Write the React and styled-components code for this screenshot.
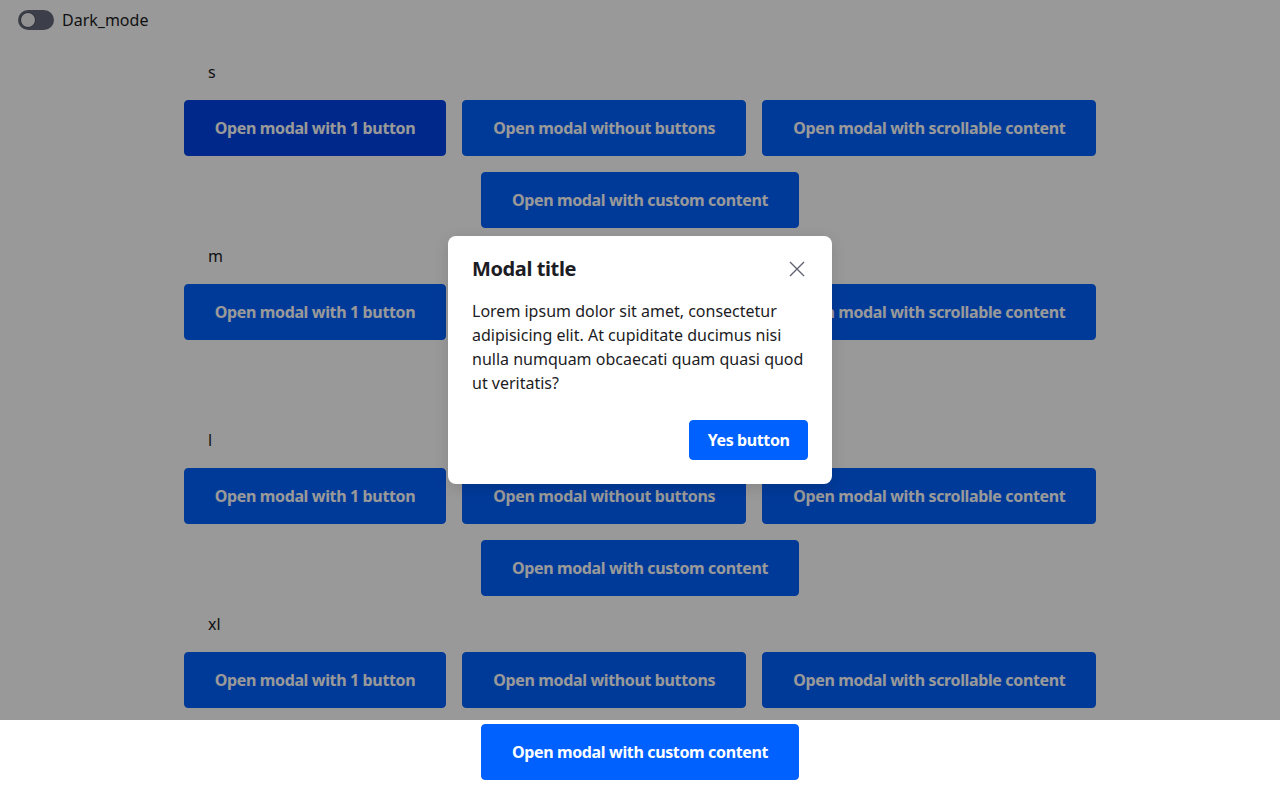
import React from 'react'
import styled, { createGlobalStyle } from 'styled-components'

const GlobalStyle = createGlobalStyle`
  html, body {
    margin: 0;
    padding: 0;
    background: #ffffff;
    font-family: "Noto Sans", "Open Sans", sans-serif;
    color: #1c1c24;
  }
`

const Page = styled.div`
  position: relative;
  width: 1280px;
  min-height: 804px;
`

const TopBar = styled.div`
  display: flex;
  align-items: center;
  gap: 8px;
  height: 40px;
  padding-left: 18px;
  font-size: 16px;
`

const Toggle = styled.span`
  display: inline-flex;
  align-items: center;
  box-sizing: border-box;
  width: 36px;
  height: 20px;
  padding: 2px;
  border-radius: 10px;
  background: #646a7a;
`

const Knob = styled.span`
  width: 16px;
  height: 16px;
  box-sizing: border-box;
  border-radius: 50%;
  background: #f2f2f2;
  border: 1px solid #4a4f5c;
`

const Content = styled.div`
  width: 916px;
  margin: 20px auto 0;
  display: flex;
  flex-direction: column;
  gap: 16px;
`

const SizeLabel = styled.div`
  padding-left: 26px;
  line-height: 24px;
  font-size: 16px;
`

const ButtonRow = styled.div`
  display: flex;
  flex-wrap: wrap;
  justify-content: center;
  gap: 16px;
`

const Button = styled.button`
  height: 56px;
  padding: 0 30px;
  border: 1px solid ${p => (p.$active ? '#0044e6' : '#0061ff')};
  border-radius: 4px;
  background: ${p => (p.$active ? '#0044e6' : '#0061ff')};
  color: #ffffff;
  font-family: inherit;
  font-size: 16px;
  font-weight: 700;
  letter-spacing: -0.36px;
  cursor: pointer;
`

const Overlay = styled.div`
  position: absolute;
  top: 0;
  left: 0;
  right: 0;
  height: 720px;
  background: rgba(0, 0, 0, 0.4);
  display: flex;
  align-items: center;
  justify-content: center;
`

const Modal = styled.div`
  width: 384px;
  box-sizing: border-box;
  padding: 21px 24px 24px;
  background: #ffffff;
  border-radius: 8px;
  box-shadow: 0 4px 16px rgba(0, 0, 0, 0.12);
  display: flex;
  flex-direction: column;
`

const ModalHeader = styled.div`
  display: flex;
  align-items: center;
  justify-content: space-between;
`

const ModalTitle = styled.h2`
  margin: 0;
  font-size: 20px;
  line-height: 24px;
  font-weight: 700;
  letter-spacing: -0.4px;
  color: #1c1c24;
`

const CloseButton = styled.button`
  display: flex;
  padding: 0;
  margin-right: -1px;
  border: none;
  background: none;
  cursor: pointer;
`

const ModalBody = styled.p`
  margin: 18px 0 25px;
  font-size: 16px;
  line-height: 24px;
  color: #1c1c24;
`

const ModalFooter = styled.div`
  display: flex;
  justify-content: flex-end;
`

const YesButton = styled(Button)`
  height: 40px;
  padding: 0 17.5px;
  letter-spacing: -0.4px;
`

const sizes = ['s', 'm', 'l', 'xl']

export default function App() {
  return (
    <Page>
      <GlobalStyle />
      <TopBar>
        <Toggle><Knob /></Toggle>
        Dark_mode
      </TopBar>
      <Content>
        {sizes.map((s, i) => (
          <React.Fragment key={s}>
            <SizeLabel>{s}</SizeLabel>
            <ButtonRow>
              <Button $active={i === 0}>Open modal with 1 button</Button>
              <Button>Open modal without buttons</Button>
              <Button>Open modal with scrollable content</Button>
              <Button>Open modal with custom content</Button>
            </ButtonRow>
          </React.Fragment>
        ))}
      </Content>
      <Overlay>
        <Modal>
          <ModalHeader>
            <ModalTitle>Modal title</ModalTitle>
            <CloseButton aria-label="close">
              <svg width="24" height="24" viewBox="0 0 24 24">
                <path d="M5 5 L19 19 M19 5 L5 19" stroke="#5e6270" strokeWidth="1.4" fill="none" />
              </svg>
            </CloseButton>
          </ModalHeader>
          <ModalBody>
            Lorem ipsum dolor sit amet, consectetur adipisicing elit. At cupiditate ducimus nisi nulla numquam obcaecati quam quasi quod ut veritatis?
          </ModalBody>
          <ModalFooter>
            <YesButton>Yes button</YesButton>
          </ModalFooter>
        </Modal>
      </Overlay>
    </Page>
  )
}
